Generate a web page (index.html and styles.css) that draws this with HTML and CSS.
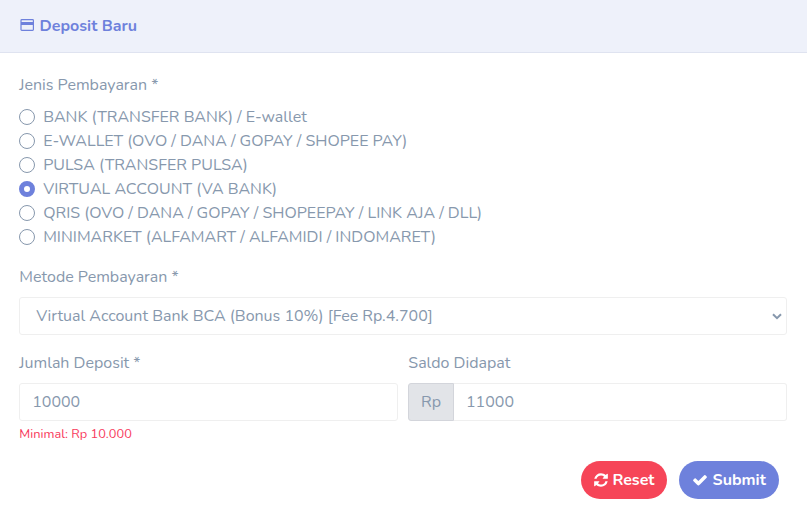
FILE: index.html
```html
<!DOCTYPE html>
<html lang="id">
<head>
<meta charset="utf-8">
<title>Deposit Baru</title>
<link rel="stylesheet" href="styles.css">
</head>
<body>
<form class="card">
  <header class="card-header">
    <svg class="icon-card" viewBox="0 0 14 12"><rect x="1" y=".7" width="12.4" height="10.6" rx=".8" fill="none" stroke="currentColor" stroke-width="1.2"/><path d="M1 3h12.400v3H1z" fill="currentColor"/></svg>
    <h1 class="title">Deposit Baru</h1>
  </header>
  <div class="card-body">
    <div class="label">Jenis Pembayaran *</div>
    <div class="options">
      <label class="option"><input type="radio" name="type"><span>BANK (TRANSFER BANK) / E-wallet</span></label>
      <label class="option"><input type="radio" name="type"><span>E-WALLET (OVO / DANA / GOPAY / SHOPEE PAY)</span></label>
      <label class="option"><input type="radio" name="type"><span>PULSA (TRANSFER PULSA)</span></label>
      <label class="option"><input type="radio" name="type" checked><span>VIRTUAL ACCOUNT (VA BANK)</span></label>
      <label class="option"><input type="radio" name="type"><span>QRIS (OVO / DANA / GOPAY / SHOPEEPAY / LINK AJA / DLL)</span></label>
      <label class="option"><input type="radio" name="type"><span>MINIMARKET (ALFAMART / ALFAMIDI / INDOMARET)</span></label>
    </div>
    <div class="label">Metode Pembayaran *</div>
    <div class="control select">
      <span>Virtual Account Bank BCA (Bonus 10%) [Fee Rp.4.700]</span>
      <svg class="chevron" viewBox="0 0 10 7"><path d="M1 1.2l4 4 4-4" fill="none" stroke="currentColor" stroke-width="2"/></svg>
    </div>
    <div class="row">
      <div class="column">
        <div class="label">Jumlah Deposit *</div>
        <input class="control" value="10000">
        <small class="hint">Minimal: Rp 10.000</small>
      </div>
      <div class="column">
        <div class="label">Saldo Didapat</div>
        <div class="group">
          <span class="prefix">Rp</span>
          <input class="control joined" value="11000">
        </div>
      </div>
    </div>
    <div class="actions">
      <button type="button" class="button reset"><svg class="icon" viewBox="0 0 1792 1792"><path d="M1639 1056q0 5-1 7-64 268-268 434.500t-478 166.500q-146 0-282.500-55t-243.500-157l-129 129q-19 19-45 19t-45-19-19-45v-448q0-26 19-45t45-19h448q26 0 45 19t19 45-19 45l-137 137q71 66 161 102t187 36q134 0 250-65t186-179q11-17 53-117 8-23 30-23h192q13 0 22.500 9.500t9.500 22.500zm25-800v448q0 26-19 45t-45 19h-448q-26 0-45-19t-19-45 19-45l138-138q-148-137-349-137-134 0-250 65t-186 179q-11 17-53 117-8 23-30 23h-199q-13 0-22.500-9.500t-9.500-22.500v-7q65-268 270-434.500t480-166.500q146 0 284 55.500t245 156.500l130-129q19-19 45-19t45 19 19 45z"/></svg><span>Reset</span></button>
      <button type="button" class="button submit"><svg class="icon" viewBox="0 0 1792 1792"><path d="M1671 566q0 40-28 68l-724 724-136 136q-28 28-68 28t-68-28l-136-136-362-362q-28-28-28-68t28-68l136-136q28-28 68-28t68 28l294 295 656-657q28-28 68-28t68 28l136 136q28 28 28 68z"/></svg><span>Submit</span></button>
    </div>
  </div>
</form>
</body>
</html>
```
FILE: styles.css
```css
* { box-sizing: border-box; }
body {
  margin: 0;
  background: #fff;
  color: #8798ad;
  font: 16px/24px Nunito, Lato, sans-serif;
}
.card { margin: 0; }
.card-header {
  display: flex;
  align-items: center;
  height: 53px;
  padding: 0 20px 1px;
  background: #eef1fa;
  border-bottom: 1px solid #dfe3f0;
  color: #6e81dc;
}
.icon-card { width: 14px; height: 12px; margin: 0 5.6px 1px 0; }
.title { margin: 0; font-size: 16px; line-height: 24px; font-weight: 700; white-space: nowrap; }
.card-body { padding: 20px 20px 0 19px; }
.label { height: 24px; margin-bottom: 8px; padding-left: .3px; white-space: nowrap; }
.options { display: grid; grid-auto-rows: 24px; margin-bottom: 16px; }
.option { display: flex; align-items: center; gap: 8.2px; white-space: nowrap; }
.option input {
  appearance: none;
  flex: none;
  width: 16px;
  height: 16px;
  margin: 0;
  border: 1px solid #8798ad;
  border-radius: 50%;
  background: #fff;
}
.option input:checked { border: 5px solid #6e81dc; }
.control {
  display: block;
  width: 100%;
  height: 38px;
  padding: 0 12px 0 12.2px;
  border: 1px solid #efefef;
  border-radius: 3px;
  background: #fff;
  color: #8798ad;
  font: inherit;
  outline: 0;
}
.select {
  display: flex;
  align-items: center;
  justify-content: space-between;
  margin-bottom: 16px;
  padding: 0 4px 0 16.2px;
  white-space: nowrap;
}
.chevron { width: 10px; height: 7px; }
.row { display: grid; grid-template-columns: 379px 379px; gap: 10px; }
.hint {
  display: block;
  height: 24px;
  margin-top: 1px;
  padding-left: .3px;
  color: #f83a5c;
  font-size: 12.8px;
  line-height: 24px;
}
.group { display: flex; }
.prefix {
  flex: none;
  width: 46px;
  height: 38px;
  border: 1px solid #d3d5db;
  border-radius: 3px 0 0 3px;
  background: #e2e4e8;
  line-height: 36px;
  text-align: center;
}
.joined { padding-left: 12px; border-left: 0; border-radius: 0 3px 3px 0; }
.actions { display: flex; justify-content: flex-end; gap: 12px; padding: 15px 8px 0 0; }
.button {
  display: flex;
  align-items: center;
  height: 38px;
  padding: 0 12px;
  border: 0;
  border-radius: 19px;
  color: #fff;
  font: 700 16px/24px Nunito, Lato, sans-serif;
}
.reset { width: 86px; background: #f64558; }
.submit { width: 100px; padding-left: 13px; background: #6e81dc; }
.icon { flex: none; width: 16px; height: 16px; margin: 0 3.4px 1px 0; fill: currentColor; }
.submit .icon { margin-right: 4.6px; }
```
